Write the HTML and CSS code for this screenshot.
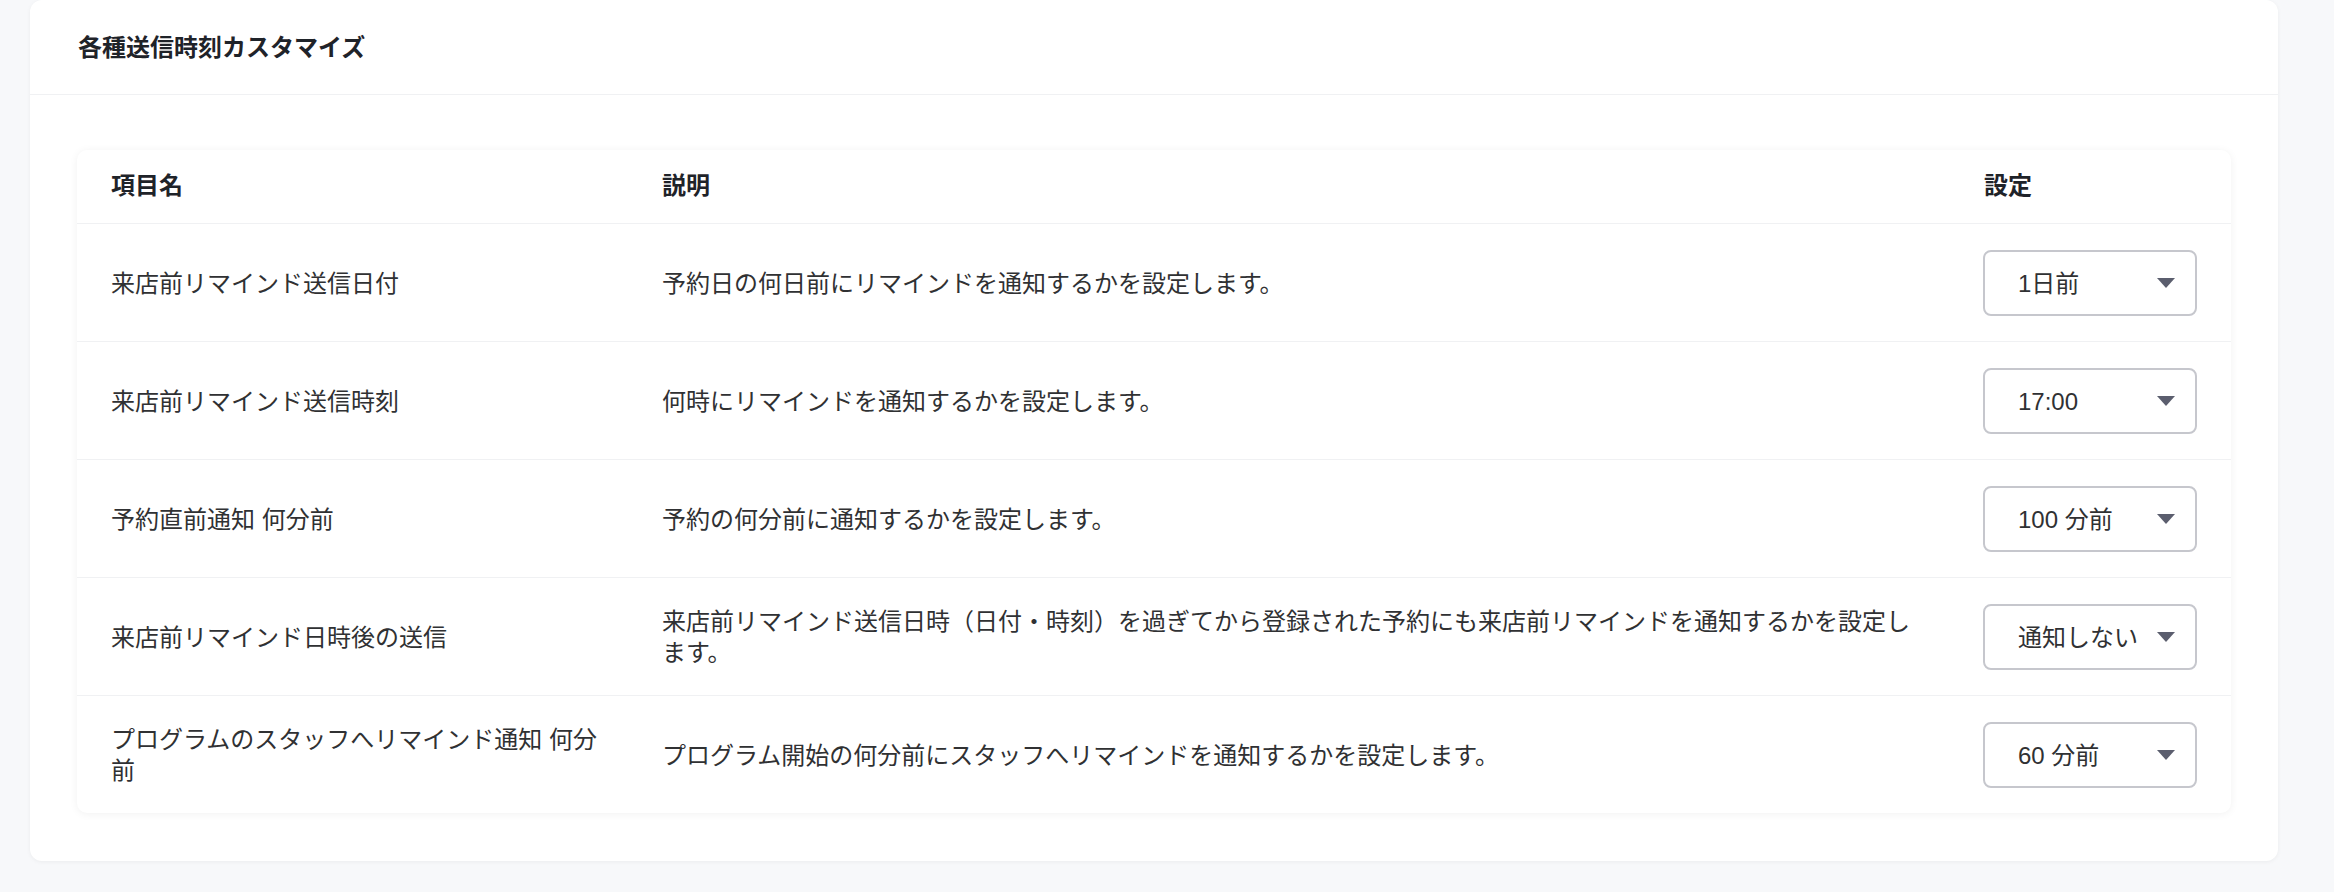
FILE: index.html
```html
<!DOCTYPE html>
<html lang="ja">
<head>
<meta charset="utf-8">
<title>各種送信時刻カスタマイズ</title>
<meta name="viewport" content="width=device-width, initial-scale=1">
<link rel="stylesheet" href="styles.css">
</head>
<body>
<div class="card">
  <div class="card-head"><h3>各種送信時刻カスタマイズ</h3></div>
  <div class="card-body">
    <div class="tbl-wrap">
      <table class="tbl">
        <colgroup><col class="c-name"><col class="c-desc"><col class="c-set"></colgroup>
        <thead>
          <tr><th class="name">項目名</th><th class="desc">説明</th><th class="set">設定</th></tr>
        </thead>
        <tbody>
          <tr>
            <td class="name">来店前リマインド送信日付</td>
            <td class="desc">予約日の何日前にリマインドを通知するかを設定します。</td>
            <td class="set"><span class="sel"><select><option>1日前</option><option>2日前</option><option>3日前</option></select><svg class="arw" width="18" height="10" viewBox="0 0 18 10"><path d="M0 0h18L9 10z"/></svg></span></td>
          </tr>
          <tr>
            <td class="name">来店前リマインド送信時刻</td>
            <td class="desc">何時にリマインドを通知するかを設定します。</td>
            <td class="set"><span class="sel"><select><option>17:00</option><option>18:00</option></select><svg class="arw" width="18" height="10" viewBox="0 0 18 10"><path d="M0 0h18L9 10z"/></svg></span></td>
          </tr>
          <tr>
            <td class="name">予約直前通知 何分前</td>
            <td class="desc">予約の何分前に通知するかを設定します。</td>
            <td class="set"><span class="sel"><select><option>100 分前</option><option>60 分前</option></select><svg class="arw" width="18" height="10" viewBox="0 0 18 10"><path d="M0 0h18L9 10z"/></svg></span></td>
          </tr>
          <tr>
            <td class="name">来店前リマインド日時後の送信</td>
            <td class="desc">来店前リマインド送信日時（日付・時刻）を過ぎてから登録された予約にも来店前リマインドを通知するかを設定します。</td>
            <td class="set"><span class="sel"><select><option>通知しない</option><option>通知する</option></select><svg class="arw" width="18" height="10" viewBox="0 0 18 10"><path d="M0 0h18L9 10z"/></svg></span></td>
          </tr>
          <tr>
            <td class="name">プログラムのスタッフへリマインド通知 何分前</td>
            <td class="desc">プログラム開始の何分前にスタッフへリマインドを通知するかを設定します。</td>
            <td class="set"><span class="sel"><select><option>60 分前</option><option>30 分前</option></select><svg class="arw" width="18" height="10" viewBox="0 0 18 10"><path d="M0 0h18L9 10z"/></svg></span></td>
          </tr>
        </tbody>
      </table>
    </div>
  </div>
</div>
</body>
</html>
```

FILE: styles.css
```css
html{font-family:"Liberation Sans","Noto Sans CJK JP",sans-serif}
body{margin:0;padding:0 56px 30px 30px;background:#f7f8fa;color:#303133}

.card{background:#fff;border-radius:12px;box-shadow:0 1px 4px rgba(0,0,0,.05)}
.card-head{display:flex;align-items:center;box-sizing:border-box;height:95px;padding:0 48px 3px;border-bottom:1px solid #f0f1f3}
.card-head h3{margin:0;font-size:24px;font-weight:700;color:#1f2329}
.card-body{padding:55px 47px 48px 47px}

.tbl-wrap{border-radius:10px;box-shadow:0 1px 8px rgba(0,0,0,.06);overflow:hidden}
.tbl{width:100%;border-collapse:collapse;table-layout:fixed;font-size:24px;line-height:31px}
.tbl col.c-name{width:552px}
.tbl col.c-set{width:280px}
.tbl th{text-align:left;font-weight:700;color:#1f2329;padding:20px 0 22px;border-bottom:1px solid #f0f1f3}
.tbl td{padding:26px 0 25px;border-bottom:1px solid #f0f1f3;vertical-align:middle}
.tbl tbody tr:last-child td{border-bottom:0}
.tbl .name{padding-left:34px;padding-right:16px}
.tbl .desc{padding-left:33px;padding-right:33px}
.tbl .set{padding-left:32px;padding-right:34px}
.tbl th.set{padding-left:33px}

/* select box with drawn arrow on top */
.sel{position:relative;display:block;width:214px}
.sel select{appearance:none;-webkit-appearance:none;display:block;width:100%;height:66px;box-sizing:border-box;
  padding:0 40px 0 33px;border:2px solid #c6c7cd;border-radius:8px;background:#fff;
  font:inherit;font-size:24px;color:#303133}
.sel .arw{position:absolute;right:22px;top:28px;fill:#5b5e6e;pointer-events:none}
```
